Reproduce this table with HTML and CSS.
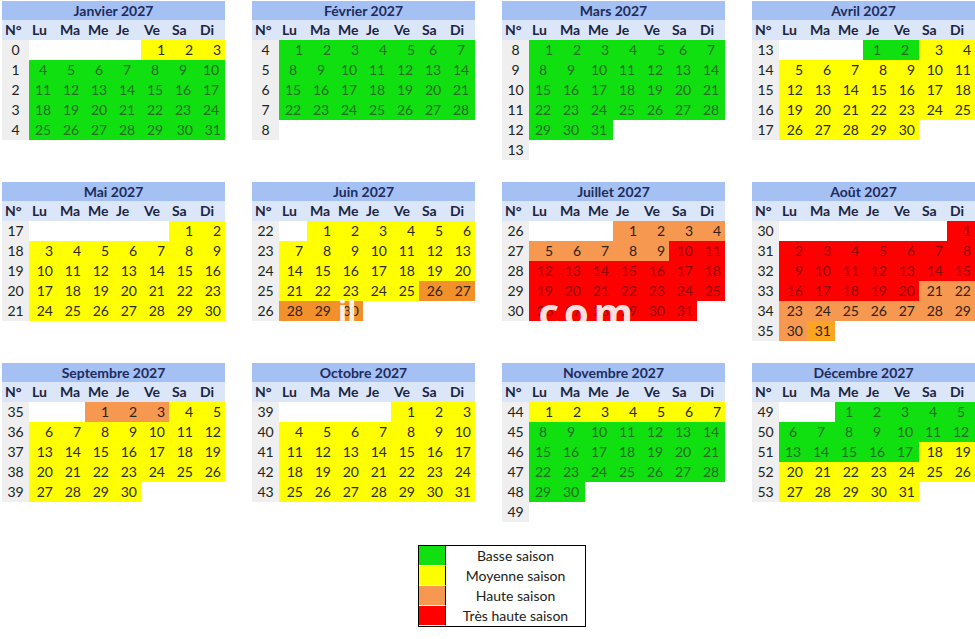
FILE: index.html
```html
<!DOCTYPE html>
<html lang="fr">
<head>
<meta charset="utf-8">
<title>Calendrier 2027 - saisons</title>
<link rel="stylesheet" href="styles.css">
</head>
<body>
<div class="page">
  <div class="calendars" id="calendars"></div>
  <div class="legend">
    <div class="sw b"></div><div class="lt">Basse saison</div>
    <div class="sw m"></div><div class="lt">Moyenne saison</div>
    <div class="sw h"></div><div class="lt">Haute saison</div>
    <div class="sw t"></div><div class="lt">Très haute saison</div>
  </div>
  <div class="watermark wm1">il</div>
  <div class="watermark wm2">.com</div>
</div>
<script src="script.js"></script>
</body>
</html>
```
FILE: styles.css
```css
html, body {
  margin: 0;
  padding: 0;
  background: #ffffff;
}
.page {
  position: relative;
  width: 975px;
  height: 639px;
  overflow: hidden;
  font-family: "Lato", "Open Sans", sans-serif;
  font-size: 14px;
  color: #222222;
}
.calendars {
  display: grid;
  grid-template-columns: repeat(4, 223px);
  column-gap: 27px;
  row-gap: 22px;
  align-items: start;
  padding: 1px 0 0 2px;
}
.month {
  display: grid;
  grid-template-columns: 27px repeat(7, 28px);
  grid-template-rows: 19px;
  grid-auto-rows: 20px;
}
.title {
  grid-column: 1 / -1;
  line-height: 19px;
  background: #a5c0f3;
  color: #1d2c5c;
  font-weight: 700;
  text-align: center;
}
.hd {
  background: #dbe6f9;
  color: #1b2542;
  font-weight: 700;
  line-height: 20px;
  padding-left: 3px;
}
.wk {
  background: #efefef;
  text-align: center;
  line-height: 20px;
  color: #222;
}
.d {
  line-height: 20px;
  text-align: right;
  padding-right: 4px;
}
.d.c {
  text-align: center;
  padding-right: 0;
}
.b { background: #10e010; color: #226b22; }
.m { background: #ffff00; color: #2a2a20; }
.h { background: #f6984f; color: #2e2218; }
.h2 { background: #f2912a; color: #2e2218; }
.h3 { background: #fba521; color: #2e2218; }
.t { background: #fe0000; color: #8e0a0a; }

.legend {
  display: grid;
  grid-template-columns: 27px 139px;
  grid-auto-rows: 20px;
  width: max-content;
  margin: 23px 0 0 418px;
  border: 1px solid #000;
}
.legend .sw {
  border-right: 1px solid #000;
  border-bottom: 1px solid #fff;
}
.legend .lt {
  text-align: center;
  color: #222;
  background: #fff;
  line-height: 20px;
}
.watermark {
  position: absolute;
  color: rgba(255, 255, 255, 0.9);
  font-weight: 700;
  font-family: "Open Sans", sans-serif;
  line-height: 1;
  pointer-events: none;
}
.wm1 {
  left: 338px;
  top: 296px;
  font-size: 30px;
}
.wm2 {
  left: 522px;
  top: 292px;
  font-size: 40px;
  letter-spacing: 5px;
}
```
FILE: script.js
```js
var months = [
  { name: "Janvier 2027", wk: 0, rows: 5, start: 4, days: 31,
    season: function (d) { return d <= 3 ? "m" : "b"; },
    right: [1, 2, 3, 30, 31] },
  { name: "Février 2027", wk: 4, rows: 5, start: 0, days: 28,
    season: function () { return "b"; }, right: [1, 2, 3, 4, 5] },
  { name: "Mars 2027", wk: 8, rows: 6, start: 0, days: 31,
    season: function () { return "b"; }, right: [1, 2, 3, 4, 5] },
  { name: "Avril 2027", wk: 13, rows: 5, start: 3, days: 30,
    season: function (d) { return d <= 2 ? "b" : "m"; }, right: [] },
  { name: "Mai 2027", wk: 17, rows: 5, start: 5, days: 31,
    season: function () { return "m"; }, right: [] },
  { name: "Juin 2027", wk: 22, rows: 5, start: 1, days: 30,
    season: function (d) { return d <= 25 ? "m" : "h2"; }, right: [] },
  { name: "Juillet 2027", wk: 26, rows: 5, start: 3, days: 31,
    season: function (d) { return d <= 9 ? "h" : "t"; }, right: [] },
  { name: "Août 2027", wk: 30, rows: 6, start: 6, days: 31,
    season: function (d) { return d <= 20 ? "t" : (d === 31 ? "h3" : "h"); }, right: [] },
  { name: "Septembre 2027", wk: 35, rows: 5, start: 2, days: 30,
    season: function (d) { return d <= 3 ? "h" : "m"; }, right: [] },
  { name: "Octobre 2027", wk: 39, rows: 5, start: 4, days: 31,
    season: function () { return "m"; }, right: [] },
  { name: "Novembre 2027", wk: 44, rows: 6, start: 0, days: 30,
    season: function (d) { return d <= 7 ? "m" : "b"; }, right: [] },
  { name: "Décembre 2027", wk: 49, rows: 5, start: 2, days: 31,
    season: function (d) { return d <= 17 ? "b" : "m"; }, right: [] }
];
var heads = ["N°", "Lu", "Ma", "Me", "Je", "Ve", "Sa", "Di"];
var root = document.getElementById("calendars");

function el(cls, text) {
  var e = document.createElement("div");
  e.className = cls;
  if (text !== undefined) e.textContent = text;
  return e;
}

months.forEach(function (m) {
  var box = el("month");
  box.appendChild(el("title", m.name));
  heads.forEach(function (h) { box.appendChild(el("hd", h)); });
  var day = 1 - m.start;
  for (var r = 0; r < m.rows; r++) {
    box.appendChild(el("wk", String(m.wk + r)));
    for (var c = 0; c < 7; c++, day++) {
      if (day >= 1 && day <= m.days) {
        var s = m.season(day);
        var cls = "d " + s;
        if (s === "b" && m.right.indexOf(day) < 0) cls += " c";
        box.appendChild(el(cls, String(day)));
      } else {
        box.appendChild(el("d"));
      }
    }
  }
  root.appendChild(box);
});
```
